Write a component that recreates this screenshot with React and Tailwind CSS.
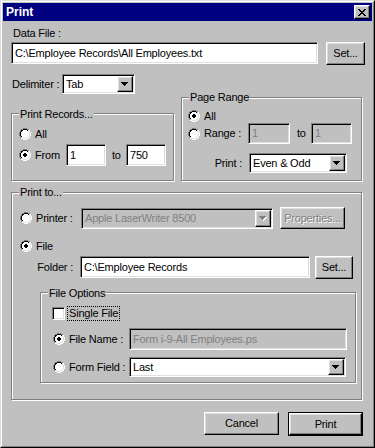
import React from "react";

const sunken =
  "border border-t-[#808080] border-l-[#808080] border-b-white border-r-white shadow-[inset_1px_1px_0_#000,inset_-1px_-1px_0_#dfdfdf]";
const raised =
  "border border-t-white border-l-white border-b-black border-r-black shadow-[inset_-1px_-1px_0_#808080,inset_1px_1px_0_#dfdfdf] bg-[#c0c0c0]";
const etched = "border border-[#808080] shadow-[inset_1px_1px_0_#fff,1px_1px_0_#fff]";
const emboss = "text-[#808080] [text-shadow:1px_1px_0_#fff]";

const OUTER = { 0: [4, 5, 6, 7], 1: [2, 3, 8, 9], 2: [1, 10], 3: [1, 10], 4: [0, 11], 5: [0, 11], 6: [0, 11], 7: [0, 11], 8: [1, 10], 9: [1, 10], 10: [2, 3, 8, 9], 11: [4, 5, 6, 7] };
const INNER = { 1: [4, 5, 6, 7], 2: [2, 3, 8, 9], 3: [2, 9], 4: [1, 10], 5: [1, 10], 6: [1, 10], 7: [1, 10], 8: [2, 9], 9: [2, 3, 8, 9], 10: [4, 5, 6, 7] };
const FILL = { 2: [4, 7], 3: [3, 8], 4: [2, 9], 5: [2, 9], 6: [2, 9], 7: [2, 9], 8: [3, 8], 9: [4, 7] };
const DOT = { 4: [5, 6], 5: [4, 7], 6: [4, 7], 7: [5, 6] };

function Radio({ checked }) {
  const rects = [];
  for (const r in OUTER)
    for (const c of OUTER[r])
      rects.push(<rect key={`o${r}-${c}`} x={c} y={+r} width="1" height="1" fill={+r + c < 11 ? "#808080" : "#ffffff"} />);
  for (const r in INNER)
    for (const c of INNER[r])
      rects.push(<rect key={`i${r}-${c}`} x={c} y={+r} width="1" height="1" fill={+r + c < 11 ? "#000000" : "#dfdfdf"} />);
  for (const r in FILL) {
    const [a, b] = FILL[r];
    rects.push(<rect key={`f${r}`} x={a} y={+r} width={b - a + 1} height="1" fill="#ffffff" />);
  }
  if (checked)
    for (const r in DOT) {
      const [a, b] = DOT[r];
      rects.push(<rect key={`d${r}`} x={a} y={+r} width={b - a + 1} height="1" fill="#000000" />);
    }
  return (
    <svg width="12" height="12" viewBox="0 0 12 12" shapeRendering="crispEdges" className="block shrink-0">
      {rects}
    </svg>
  );
}

function Arrow({ disabled }) {
  const tri = (dx, dy, fill) => (
    <g fill={fill}>
      <rect x={0 + dx} y={0 + dy} width="7" height="1" />
      <rect x={1 + dx} y={1 + dy} width="5" height="1" />
      <rect x={2 + dx} y={2 + dy} width="3" height="1" />
      <rect x={3 + dx} y={3 + dy} width="1" height="1" />
    </g>
  );
  return (
    <svg width="8" height="5" viewBox="0 0 8 5" shapeRendering="crispEdges" className="block">
      {disabled ? (
        <>
          {tri(1, 1, "#ffffff")}
          {tri(0, 0, "#808080")}
        </>
      ) : (
        tri(0, 0, "#000000")
      )}
    </svg>
  );
}

function CloseGlyph() {
  const rows = ["KK....KK", ".KK..KK.", "..KKKK..", "...KK...", "..KKKK..", ".KK..KK.", "KK....KK"];
  const rects = [];
  rows.forEach((row, y) =>
    row.split("").forEach((ch, x) => {
      if (ch === "K") rects.push(<rect key={`${x}-${y}`} x={x} y={y} width="1" height="1" fill="#000" />);
    })
  );
  return (
    <svg width="8" height="7" viewBox="0 0 8 7" shapeRendering="crispEdges" className="block">
      {rects}
    </svg>
  );
}

function Field({ className = "", disabled, children }) {
  return (
    <div
      className={`flex items-center ${sunken} ${
        disabled ? "bg-[#c0c0c0] text-[#808080]" : "bg-white text-black"
      } pl-[3px] overflow-hidden whitespace-nowrap shrink-0 ${className}`}
    >
      {children}
    </div>
  );
}

function Combo({ className = "", value, disabled }) {
  return (
    <div
      className={`flex items-stretch ${sunken} ${
        disabled ? "bg-[#c0c0c0] text-[#808080]" : "bg-white text-black"
      } shrink-0 ${className}`}
    >
      <span className="flex-1 flex items-center pl-[3px] whitespace-nowrap overflow-hidden">{value}</span>
      <div className={`${raised} w-[16px] my-[1px] mr-[1px] flex items-center justify-center`}>
        <Arrow disabled={disabled} />
      </div>
    </div>
  );
}

function Btn({ className = "", children, disabled, def }) {
  const inner = (
    <div className={`${raised} w-full h-full flex items-center justify-center ${disabled ? emboss : "text-black"}`}>
      {children}
    </div>
  );
  if (def) return <div className={`border border-black shrink-0 ${className}`}>{inner}</div>;
  return <div className={`shrink-0 ${className}`}>{inner}</div>;
}

function Legend({ className = "", children }) {
  return <span className={`absolute px-[1px] bg-[#c0c0c0] whitespace-nowrap ${className}`}>{children}</span>;
}

export default function App() {
  return (
    <div className="w-[375px] h-[448px] bg-[#c0c0c0] border border-t-[#dfdfdf] border-l-[#dfdfdf] border-b-black border-r-black [font-family:Liberation_Sans,Arial,sans-serif] text-[11px] leading-[13px] tracking-[-0.2px] text-black overflow-hidden">
      <div className="h-full border border-t-white border-l-white border-b-[#808080] border-r-[#808080] p-[1px] flex flex-col">
        {/* Title bar */}
        <div className="h-[18px] bg-[#000080] flex items-center justify-between pl-[3px] pr-[2px] shrink-0">
          <span className="text-white font-bold text-[12px] tracking-normal">Print</span>
          <div className={`${raised} w-[16px] h-[14px] flex items-center justify-center`}>
            <CloseGlyph />
          </div>
        </div>

        <div className="flex flex-col pl-[8px]">
          <div className="ml-[2px] mt-[6px]">Data File :</div>
          <div className="flex items-start mt-[2px] gap-[8px]">
            <Field className="w-[307px] h-[22px]">C:\Employee Records\All Employees.txt</Field>
            <Btn className="w-[39px] h-[23px]">Set...</Btn>
          </div>

          <div className="flex items-center mt-[9px] h-[20px]">
            <span className="w-[51px] pl-[1px] shrink-0">Delimiter :</span>
            <Combo className="w-[73px] h-[20px]" value="Tab" />
          </div>

          <div className="flex items-end gap-[7px] mt-[3px]">
            {/* Print Records */}
            <div className={`relative w-[163px] h-[68px] ${etched} flex flex-col shrink-0`}>
              <Legend className="left-[7px] top-[-6px]">Print Records...</Legend>
              <div className="flex items-center h-[12px] mt-[14px] pl-[7px]">
                <Radio />
                <span className="ml-[4px]">All</span>
              </div>
              <div className="flex items-center h-[22px] mt-[4px] pl-[7px]">
                <Radio checked />
                <span className="ml-[4px] w-[31px] shrink-0">From</span>
                <Field className="w-[40px] h-[22px]">1</Field>
                <span className="w-[20px] pl-[6px] shrink-0">to</span>
                <Field className="w-[40px] h-[22px]">750</Field>
              </div>
            </div>

            {/* Page Range */}
            <div className={`relative w-[181px] h-[84px] ${etched} flex flex-col shrink-0`}>
              <Legend className="left-[7px] top-[-7px]">Page Range</Legend>
              <div className="flex items-center h-[12px] mt-[12px] pl-[6px]">
                <Radio checked />
                <span className="ml-[4px]">All</span>
              </div>
              <div className="flex items-center h-[21px] mt-[1px] pl-[6px]">
                <Radio />
                <span className="ml-[4px] w-[44px] shrink-0">Range :</span>
                <Field disabled className="w-[42px] h-[21px]">1</Field>
                <span className="w-[21px] pl-[7px] shrink-0">to</span>
                <Field disabled className="w-[41px] h-[21px]">1</Field>
              </div>
              <div className="flex items-center h-[20px] mt-[9px]">
                <span className="w-[60px] text-right shrink-0">Print :</span>
                <Combo className="ml-[7px] w-[98px] h-[20px]" value="Even & Odd" />
              </div>
            </div>
          </div>

          {/* Print to */}
          <div className={`relative w-[351px] h-[208px] mt-[11px] ${etched} flex flex-col shrink-0`}>
            <Legend className="left-[7px] top-[-7px]">Print to...</Legend>
            <div className="flex items-center h-[22px] mt-[14px] pl-[8px]">
              <Radio />
              <span className="ml-[4px] w-[45px] shrink-0">Printer :</span>
              <Combo disabled className="w-[192px] h-[21px]" value="Apple LaserWriter 8500" />
              <Btn disabled className="ml-[7px] w-[65px] h-[22px]">Properties...</Btn>
            </div>
            <div className="flex items-center h-[12px] mt-[11px] pl-[8px]">
              <Radio checked />
              <span className="ml-[4px]">File</span>
            </div>
            <div className="flex items-start mt-[4px]">
              <span className="w-[61px] h-[22px] flex items-center justify-end shrink-0">Folder :</span>
              <Field className="ml-[7px] w-[230px] h-[22px]">C:\Employee Records</Field>
              <Btn className="ml-[5px] w-[38px] h-[23px]">Set...</Btn>
            </div>

            {/* File Options */}
            <div className={`relative ml-[28px] mt-[13px] w-[316px] h-[91px] ${etched} flex flex-col shrink-0`}>
              <Legend className="left-[7px] top-[-6px]">File Options</Legend>
              <div className="flex items-center h-[15px] mt-[13px] pl-[11px]">
                <div className={`w-[13px] h-[13px] bg-white ${sunken} shrink-0`} />
                <span className="ml-[2px] h-[15px] px-[1px] border border-dotted border-black flex items-center">
                  Single File
                </span>
              </div>
              <div className="flex items-center h-[22px] mt-[7px] pl-[12px]">
                <Radio checked />
                <span className="ml-[4px] w-[60px] shrink-0">File Name :</span>
                <Field disabled className="w-[218px] h-[22px]">Form i-9-All Employees.ps</Field>
              </div>
              <div className="flex items-center h-[20px] mt-[7px] pl-[12px]">
                <Radio />
                <span className="ml-[4px] w-[60px] shrink-0">Form Field :</span>
                <Combo className="w-[217px] h-[20px]" value="Last" />
              </div>
            </div>
          </div>

          <div className="flex gap-[9px] mt-[12px] pl-[193px]">
            <Btn className="w-[75px] h-[23px]">Cancel</Btn>
            <Btn def className="w-[75px] h-[24px]">Print</Btn>
          </div>
        </div>
      </div>
    </div>
  );
}
